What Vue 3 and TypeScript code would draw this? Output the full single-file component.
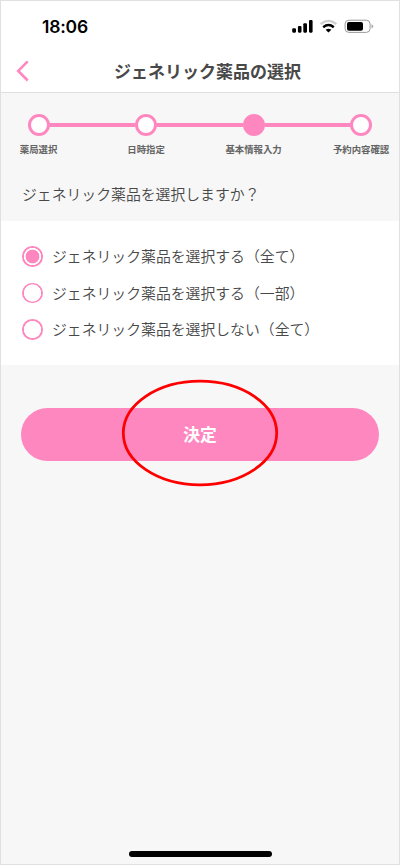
<script setup lang="ts">
import { ref } from 'vue'

interface Step {
  label: string
  active: boolean
}

const steps: Step[] = [
  { label: '薬局選択', active: false },
  { label: '日時指定', active: false },
  { label: '基本情報入力', active: true },
  { label: '予約内容確認', active: false },
]

const options: string[] = [
  'ジェネリック薬品を選択する（全て）',
  'ジェネリック薬品を選択する（一部）',
  'ジェネリック薬品を選択しない（全て）',
]

const selected = ref<number>(0)
</script>

<template>
  <div class="screen">
    <header class="header">
      <div class="status">
        <span class="time">18:06</span>
        <svg class="indicators" width="82" height="16" viewBox="0 0 82 16">
          <rect x="0.2" y="9.3" width="3.8" height="4.4" rx="1.1" />
          <rect x="5.9" y="7" width="3.6" height="6.7" rx="1.1" />
          <rect x="11.3" y="4.2" width="3.7" height="9.5" rx="1.1" />
          <rect x="17" y="1" width="3.6" height="12.7" rx="1.1" />
          <path d="M28.6 5.1 Q36.5 -1.3 44.4 5.1" fill="none" stroke="#cfcfcf" stroke-width="2.3" />
          <path d="M31.2 8.2 Q36.5 3.9 41.8 8.2" fill="none" stroke="#000" stroke-width="2.5" />
          <path d="M33.6 10.8 Q36.5 8.6 39.4 10.8 L36.5 13.6 Z" />
          <rect x="53.1" y="1.2" width="25" height="12.2" rx="3.8" fill="none" stroke="#9b9b9b" />
          <rect x="55" y="3" width="16" height="8.8" rx="2" />
          <path d="M79.5 5.2 Q81.2 5.8 81.2 7.3 T79.5 9.5 Z" fill="#a5a5a5" />
        </svg>
      </div>
      <div class="nav">
        <button class="back" type="button" aria-label="戻る">
          <svg width="14" height="24" viewBox="0 0 14 24">
            <path d="M11.7 2.3 L2.2 11.9 L11.7 21.5" fill="none" stroke="#ff87bf" stroke-width="2.6" />
          </svg>
        </button>
        <h1>ジェネリック薬品の選択</h1>
      </div>
    </header>

    <ol class="steps">
      <li v-for="step in steps" :key="step.label" class="step">
        <div class="track"><i class="line" /><i class="dot" :class="{ active: step.active }" /><i class="line" /></div>
        <span class="step-label">{{ step.label }}</span>
      </li>
    </ol>

    <p class="question">ジェネリック薬品を選択しますか？</p>

    <div class="options">
      <label v-for="(option, i) in options" :key="option" class="option">
        <input v-model="selected" class="radio" type="radio" name="generic" :value="i" />
        <span class="option-text">{{ option }}</span>
      </label>
    </div>

    <div class="action">
      <button class="submit" type="button">決定</button>
      <svg class="highlight" width="158" height="108" viewBox="0 0 158 108">
        <ellipse cx="79" cy="54" rx="76.7" ry="51.8" fill="none" stroke="#ff0000" stroke-width="2.8" />
      </svg>
    </div>

    <div class="home-bar" />
  </div>
</template>

<style>
body {
  margin: 0;
}
</style>

<style scoped>
.screen {
  box-sizing: border-box;
  width: 400px;
  height: 865px;
  border: 1px solid #e0e0e0;
  background: #f7f7f7;
  color: #484848;
  font-family: "Noto Sans CJK JP", sans-serif;
  font-weight: 350;
  display: flex;
  flex-direction: column;
  overflow: hidden;
}
.header {
  box-sizing: border-box;
  height: 92px;
  background: #fff;
  border-bottom: 1px solid #dfdfdf;
}
.status {
  box-sizing: border-box;
  height: 50px;
  display: flex;
  justify-content: space-between;
  align-items: center;
  padding: 2px 25px 0 41px;
}
.time {
  color: #000;
  font: 600 17.5px/20px Inter, sans-serif;
  letter-spacing: -0.2px;
}
.indicators {
  display: block;
}
.nav {
  height: 40px;
  display: grid;
  grid-template-columns: 40px 1fr 25px;
  align-items: center;
}
.back {
  border: 0;
  padding: 0 0 0 15px;
  background: none;
  display: flex;
}
h1 {
  margin: 0;
  text-align: center;
  font-size: 17px;
  line-height: 24px;
  font-weight: 600;
  white-space: nowrap;
}
.steps {
  list-style: none;
  display: grid;
  grid-template-columns: repeat(4, 107.5px);
  margin: 21px 0 0 -16.2px;
  padding: 0;
}
.step {
  display: flex;
  flex-direction: column;
  align-items: center;
}
.track {
  width: 100%;
  display: flex;
  align-items: center;
}
.line {
  flex: 1;
  height: 4px;
  background: #ff87bf;
}
.step:first-child .line:first-child,
.step:last-child .line:last-child {
  visibility: hidden;
}
.dot {
  box-sizing: border-box;
  width: 22px;
  height: 22px;
  border: 3px solid #ff87bf;
  border-radius: 50%;
  background: #fff;
}
.dot.active {
  background: #ff87bf;
}
.step-label {
  margin-top: 6px;
  font-size: 9.4px;
  line-height: 14px;
  font-weight: 600;
  color: #646464;
  white-space: nowrap;
}
.question {
  margin: 27px 0 0 21px;
  font-size: 14.85px;
  line-height: 22px;
}
.options {
  box-sizing: border-box;
  height: 144px;
  margin-top: 16px;
  padding: 17.3px 21px;
  background: #fff;
}
.option {
  height: 36.5px;
  display: flex;
  align-items: center;
  gap: 9.5px;
  font-size: 14.85px;
  line-height: 22px;
}
.option-text {
  padding-bottom: 1px;
}
.radio {
  appearance: none;
  box-sizing: border-box;
  flex: none;
  width: 20.5px;
  height: 20.5px;
  margin: 0;
  border-radius: 50%;
  background: radial-gradient(circle, #fff 8.3px, #ff87bf 8.9px);
}
.radio:checked {
  background: radial-gradient(circle, #ff87bf 6.6px, #fff 7.2px, #fff 8.3px, #ff87bf 8.9px);
}
.action {
  position: relative;
  margin: 42.5px 20px 0;
}
.submit {
  display: block;
  width: 100%;
  height: 53.5px;
  border: 0;
  border-radius: 27px;
  padding: 0 0 1px;
  background: #ff87bf;
  color: #fff;
  font: 600 16.8px/24px "Noto Sans CJK JP", sans-serif;
}
.highlight {
  position: absolute;
  left: 100px;
  top: -28.5px;
  pointer-events: none;
}
.home-bar {
  width: 143px;
  height: 6px;
  margin: auto auto 7px;
  border-radius: 3px;
  background: #000;
}
</style>
